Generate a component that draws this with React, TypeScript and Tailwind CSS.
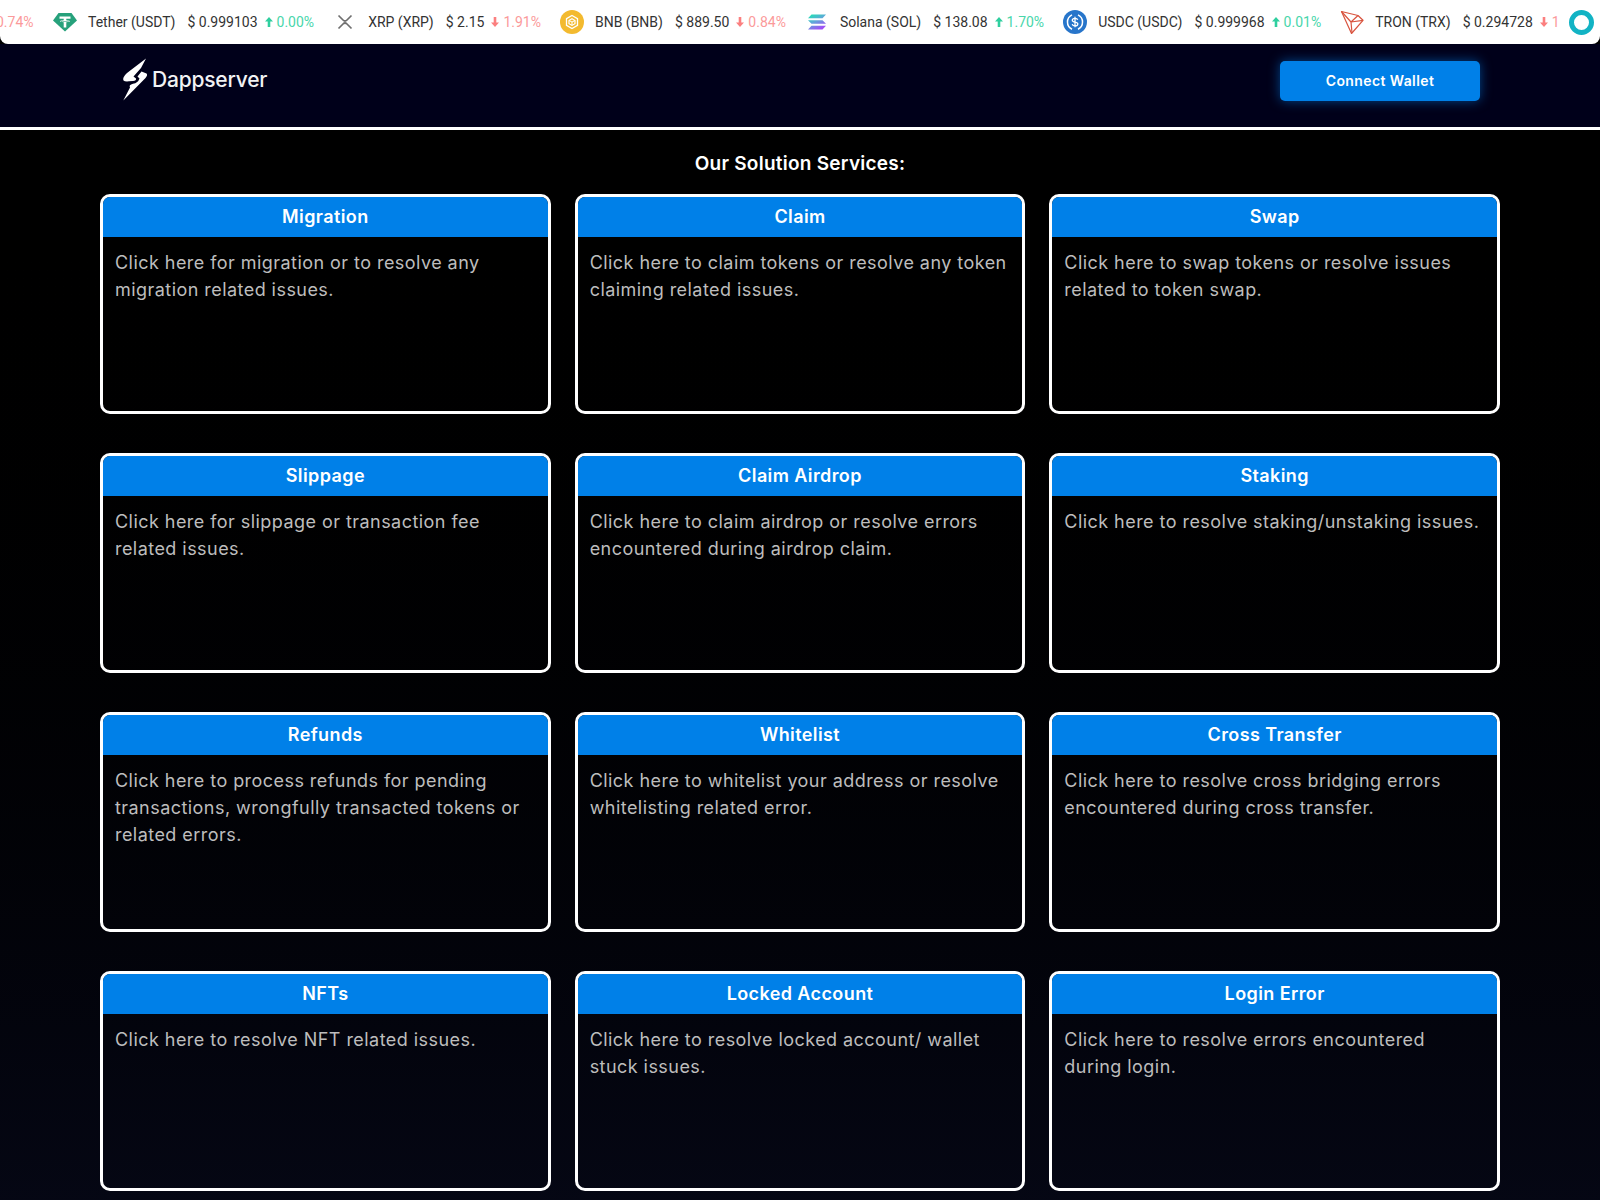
import type { ReactNode } from "react";

type Coin = {
  name: string;
  price: string;
  change: string;
  up: boolean;
  icon: ReactNode;
};

type Service = {
  title: string;
  text: string;
};

const SERVICES: Service[] = [
  { title: "Migration", text: "Click here for migration or to resolve any migration related issues." },
  { title: "Claim", text: "Click here to claim tokens or resolve any token claiming related issues." },
  { title: "Swap", text: "Click here to swap tokens or resolve issues related to token swap." },
  { title: "Slippage", text: "Click here for slippage or transaction fee related issues." },
  { title: "Claim Airdrop", text: "Click here to claim airdrop or resolve errors encountered during airdrop claim." },
  { title: "Staking", text: "Click here to resolve staking/unstaking issues." },
  { title: "Refunds", text: "Click here to process refunds for pending transactions, wrongfully transacted tokens or related errors." },
  { title: "Whitelist", text: "Click here to whitelist your address or resolve whitelisting related error." },
  { title: "Cross Transfer", text: "Click here to resolve cross bridging errors encountered during cross transfer." },
  { title: "NFTs", text: "Click here to resolve NFT related issues." },
  { title: "Locked Account", text: "Click here to resolve locked account/ wallet stuck issues." },
  { title: "Login Error", text: "Click here to resolve errors encountered during login." },
];

function TetherIcon() {
  return (
    <svg viewBox="0 0 24 24" className="h-6 w-6">
      <path d="M5.500 3.500h13L24 11 12 22 0 11z" fill="#26a17b" transform="translate(0 -0.5)" />
      <path d="M6.500 6.500h11v2.200h-4.200v1.600c2.200.1 3.700.5 3.700 1s-1.500.9-3.700 1v5.200h-2.600v-5.200c-2.200-.1-3.700-.5-3.700-1s1.500-.9 3.700-1V8.700H6.500z" fill="#fff" />
      <path d="M8 11.200c1 .4 7 .4 8 0" stroke="#26a17b" strokeWidth="0.6" fill="none" />
    </svg>
  );
}

function XrpIcon() {
  return (
    <svg viewBox="0 0 24 24" className="h-6 w-6" fill="none" stroke="#6f6f6f" strokeWidth="1.7">
      <path d="M5.500 5.500 10 10c1.200 1.200 2.800 1.200 4 0l4.500-4.500" />
      <path d="M5.500 18.500 10 14c1.200-1.200 2.800-1.200 4 0l4.500 4.500" />
    </svg>
  );
}

function BnbIcon() {
  return (
    <svg viewBox="0 0 24 24" className="h-6 w-6">
      <circle cx="12" cy="12" r="12" fill="#f3ba2f" />
      <path d="M12 5.500 17.500 8.700v6.600L12 18.500l-5.500-3.200V8.700z" fill="none" stroke="#fff" strokeWidth="1.300" />
      <path d="M12 8.800 15 10.500v3.200L12 15.400l-3-1.700v-3.200z" fill="none" stroke="#fff" strokeWidth="1.200" />
      <path d="M12 12v3.400M9 10.500l3 1.500 3-1.500" stroke="#fff" strokeWidth="1" fill="none" />
    </svg>
  );
}

function SolanaIcon() {
  return (
    <svg viewBox="0 0 24 24" className="h-6 w-6">
      <defs>
        <linearGradient id="sol" x1="0" y1="0" x2="0.6" y2="1">
          <stop offset="0" stopColor="#19e8b0" />
          <stop offset="0.5" stopColor="#5fa8d8" />
          <stop offset="1" stopColor="#a04ff5" />
        </linearGradient>
      </defs>
      <path d="M6.500 4.500H21l-3.500 3.700H3zM3 10.200h14.500L21 13.800H6.500zM6.500 15.800H21l-3.500 3.700H3z" fill="url(#sol)" />
    </svg>
  );
}

function UsdcIcon() {
  return (
    <svg viewBox="0 0 24 24" className="h-6 w-6">
      <circle cx="12" cy="12" r="12" fill="#2775ca" />
      <path d="M9 4.800a8 8 0 0 0 0 14.400M15 4.800a8 8 0 0 1 0 14.400" stroke="#fff" strokeWidth="1.500" fill="none" />
      <path d="M14.700 9.800c-.3-1-1.300-1.500-2.700-1.500-1.500 0-2.700.7-2.700 1.900 0 2.700 5.500 1.200 5.500 3.700 0 1.200-1.200 1.900-2.800 1.900-1.500 0-2.500-.6-2.800-1.700M12 6.800v10.400" stroke="#fff" strokeWidth="1.300" fill="none" />
    </svg>
  );
}

function TronIcon() {
  return (
    <svg viewBox="0 0 24 24" className="h-6 w-6" fill="none" stroke="#d9543f" strokeWidth="1.200" strokeLinejoin="round">
      <path d="M1.500 1.500 18 5.500l5 4.800L11.500 23.500z" />
      <path d="M1.500 1.500 11 12l1 11M11 12 23 10.300M11 12l7-6.500" />
    </svg>
  );
}

const COINS: Coin[] = [
  { name: "Tether (USDT)", price: "$ 0.999103", change: "0.00%", up: true, icon: <TetherIcon /> },
  { name: "XRP (XRP)", price: "$ 2.15", change: "1.91%", up: false, icon: <XrpIcon /> },
  { name: "BNB (BNB)", price: "$ 889.50", change: "0.84%", up: false, icon: <BnbIcon /> },
  { name: "Solana (SOL)", price: "$ 138.08", change: "1.70%", up: true, icon: <SolanaIcon /> },
  { name: "USDC (USDC)", price: "$ 0.999968", change: "0.01%", up: true, icon: <UsdcIcon /> },
  { name: "TRON (TRX)", price: "$ 0.294728", change: "1", up: false, icon: <TronIcon /> },
];

function ChangeArrow({ up }: { up: boolean }) {
  return (
    <svg viewBox="0 0 8 10" className={up ? "h-[10px] w-2 text-[#2fcf9f]" : "h-[10px] w-2 text-[#fb7f7f]"} fill="currentColor">
      {up ? <path d="M4 0 8 4.500H5.300V10H2.700V4.500H0z" /> : <path d="M4 10 8 5.500H5.300V0H2.700V5.500H0z" />}
    </svg>
  );
}

function Ticker() {
  return (
    <div className="flex h-11 items-center overflow-hidden rounded-b-lg bg-white pr-[6px] font-['Roboto',sans-serif] text-sm whitespace-nowrap text-[#333]">
      <div className="flex min-w-0 flex-1 items-center overflow-hidden">
        <span className="ml-[-4px] w-[57px] shrink-0 text-[#fb9a9a]">0.74%</span>
        {COINS.map((coin) => (
          <div key={coin.name} className="mr-[19px] flex shrink-0 items-center">
            {coin.icon}
            <span className="ml-[11px]">{coin.name}</span>
            <span className="ml-3">{coin.price}</span>
            <span className={coin.up ? "ml-[7px] flex items-center gap-1 text-[#49d6ab]" : "ml-[7px] flex items-center gap-1 text-[#fb9a9a]"}>
              <ChangeArrow up={coin.up} />
              {coin.change}
            </span>
          </div>
        ))}
      </div>
      <div className="h-[25px] w-[25px] shrink-0 rounded-full border-[5px] border-[#12b3c4]" />
    </div>
  );
}

function Logo() {
  return (
    <div className="flex items-center">
      <svg viewBox="0 0 30 44" className="h-11 w-[30px]" fill="#fff">
        <path d="M26 1.500 L7 16 Q2 20.500 3.500 23.500 Q5 24.800 9 24.300 L13 24 Q16.500 23.500 16 21.500 L13.500 19.500 L21 11z" />
        <path d="M21.500 14.500 L26.500 16.500 Q28 18 25.500 21 L3.300 43.500 L10 30.500 Q8.500 28 13 26.800 Q18 26 19.500 21.500 L17.500 19.500z" />
      </svg>
      <span className="ml-[2px] pt-[2px] font-['Inter',sans-serif] text-[21px] font-medium tracking-[-0.2px] text-[#f2f2f4]">Dappserver</span>
    </div>
  );
}

function ServiceCard({ service }: { service: Service }) {
  return (
    <article className="h-[220px] overflow-hidden rounded-[10px] border-[3px] border-white">
      <h3 className="flex h-10 items-center justify-center bg-[#0080e8] pb-px text-[18px] font-semibold tracking-[0.4px] text-white">{service.title}</h3>
      <p className="p-3 text-[18px] leading-[27px] tracking-[0.45px] text-[#bdbdbd]">{service.text}</p>
    </article>
  );
}

export default function App() {
  return (
    <div className="min-h-[1200px] bg-gradient-to-b from-[#000000] from-[12%] to-[#050714] font-['Inter',sans-serif]">
      <Ticker />
      <header className="flex h-[86px] items-start justify-between border-b-[3px] border-white bg-[#00001a] px-[120px]">
        <div className="mt-[13px]">
          <Logo />
        </div>
        <button className="mt-[17px] h-10 w-[200px] rounded-[5px] bg-[#0080e8] text-sm font-semibold tracking-[0.4px] text-white shadow-[0_0_12px_rgba(0,128,232,0.55)]">
          Connect Wallet
        </button>
      </header>
      <main className="px-[100px] pb-4">
        <h2 className="flex h-[64px] items-center justify-center pt-1 text-[19px] font-semibold tracking-[0.25px] text-white">Our Solution Services:</h2>
        <div className="grid grid-cols-3 gap-x-6 gap-y-[39px]">
          {SERVICES.map((service) => (
            <ServiceCard key={service.title} service={service} />
          ))}
        </div>
      </main>
    </div>
  );
}
